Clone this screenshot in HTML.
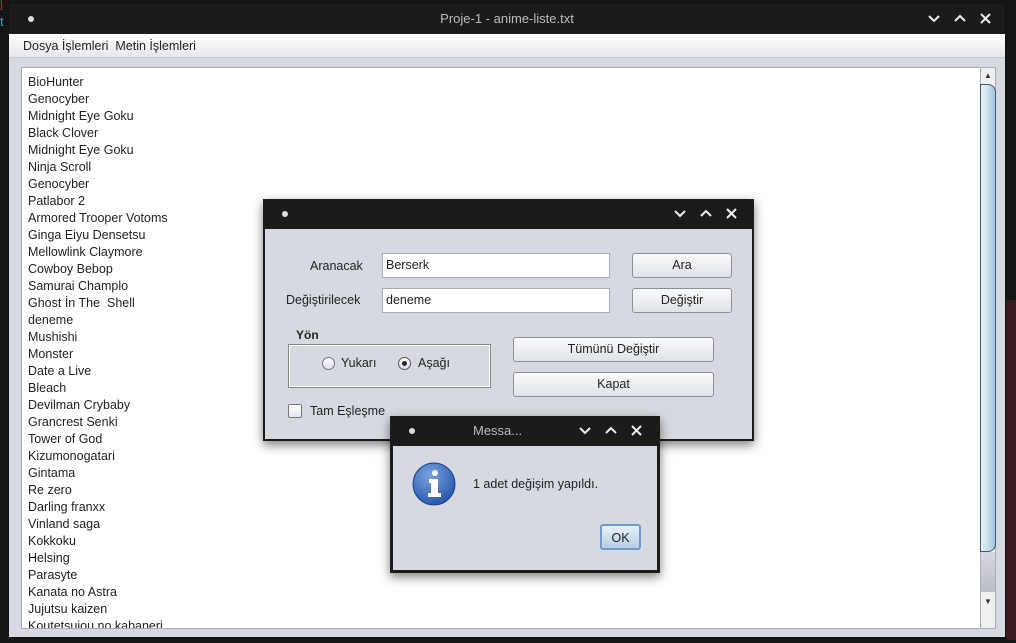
<!DOCTYPE html>
<html><head><meta charset="utf-8"><style>
*{margin:0;padding:0;box-sizing:border-box}
body{width:1016px;height:643px;background:#151515;position:relative;overflow:hidden;font-family:"Liberation Sans","DejaVu Sans",sans-serif;font-size:12.5px;color:#222}
.abs{position:absolute}
.tb{background:#1b1c1a;color:#ccc}
.dot{position:absolute;width:6px;height:6px;border-radius:3px;background:#ddd}
.ctl{position:absolute;color:#eee;font-size:14px;font-weight:bold}
.btn{position:absolute;border:1px solid #8c9099;border-radius:3px;background:linear-gradient(#fafbfc,#dfe2e7);text-align:center;font-size:12.5px;color:#222}
.fld{position:absolute;background:#fff;border:1px solid #a8abb0;padding-left:3px;font-size:12.5px}
</style></head><body>
<div class="abs" style="left:0;top:0;width:8px;height:40px;color:#c33;font-size:10px">]</div>
<div class="abs" style="left:0;top:14px;color:#2ab;font-size:13px">t</div>
<div class="abs" style="left:1006px;top:300px;width:10px;height:340px;background:#3a1a1e"></div>
<!-- main window -->
<div class="abs" style="left:8px;top:3px;width:998px;height:635px;background:#d6d9df;border:1px solid #111">
 <div class="abs tb" style="left:0;top:0;width:996px;height:30px">
  <div class="dot" style="left:19px;top:12px"></div>
  <div class="abs" style="left:0;width:996px;top:7px;text-align:center;font-size:13px;color:#bbb">Proje-1 - anime-liste.txt</div>
  <svg class="abs" style="left:916px;top:8px" width="80" height="14" viewBox="0 0 80 14" fill="none" stroke="#eee" stroke-width="2"><path d="M4 4l5 5 5-5"/><path d="M30 9l5-5 5 5"/><path d="M56 2l9 9M65 2l-9 9"/></svg>
 </div>
 <div class="abs" style="left:0;top:30px;width:996px;height:24px;background:linear-gradient(#fff,#e6e8eb);border-bottom:1px solid #c6c9ce">
  <div class="abs" style="left:14px;top:5px">Dosya İşlemleri&nbsp;&nbsp;Metin İşlemleri</div>
 </div>
 <div class="abs" style="left:12px;top:63px;width:960px;height:562px;background:#fff;border:1px solid #a9acb1;overflow:hidden">
  <div style="padding:6px 0 0 6px;line-height:17px">BioHunter<br>Genocyber<br>Midnight Eye Goku<br>Black Clover<br>Midnight Eye Goku<br>Ninja Scroll<br>Genocyber<br>Patlabor 2<br>Armored Trooper Votoms<br>Ginga Eiyu Densetsu<br>Mellowlink Claymore<br>Cowboy Bebop<br>Samurai Champlo<br>Ghost İn The &nbsp;Shell<br>deneme<br>Mushishi<br>Monster<br>Date a Live<br>Bleach<br>Devilman Crybaby<br>Grancrest Senki<br>Tower of God<br>Kizumonogatari<br>Gintama<br>Re zero<br>Darling franxx<br>Vinland saga<br>Kokkoku<br>Helsing<br>Parasyte<br>Kanata no Astra<br>Jujutsu kaizen<br>Koutetsujou no kabaneri</div>
 </div>
 <div class="abs" style="left:971px;top:63px;width:16px;height:562px;background:#eef0f2;border:1px solid #a9acb1">
  <div class="abs" style="left:3px;top:3px;font-size:8px;color:#333">▲</div>
  <div class="abs" style="left:-1px;top:16px;width:16px;height:468px;border:1px solid #3c5a7a;border-radius:0 8px 8px 0;background:linear-gradient(90deg,#eaf3fa,#c3d8ea 60%,#a8c2d8)"></div>
  <div class="abs" style="left:0;top:484px;width:14px;height:40px;background:linear-gradient(#d6d9df,#b8bcc4)"></div>
  <div class="abs" style="left:3px;top:529px;font-size:8px;color:#333">▼</div>
 </div>
</div>
<!-- find/replace dialog -->
<div class="abs" style="left:263px;top:199px;width:491px;height:242px;background:#d6d9df;border:2px solid #1b1c1a;border-top:none;box-shadow:0 4px 10px rgba(0,0,0,.5)">
 <div class="abs tb" style="left:-2px;top:0;width:491px;height:30px;border-radius:3px 3px 0 0">
  <div class="dot" style="left:19px;top:12px"></div>
  <svg class="abs" style="left:408px;top:9px" width="80" height="14" viewBox="0 0 80 14" fill="none" stroke="#eee" stroke-width="2"><path d="M4 3l5 5 5-5"/><path d="M30 8l5-5 5 5"/><path d="M56 1l9 9M65 1l-9 9"/></svg>
 </div>
 <div class="abs" style="left:45px;top:60px">Aranacak</div>
 <div class="abs" style="left:21px;top:94px">Değiştirilecek</div>
 <div class="fld" style="left:117px;top:54px;width:228px;height:25px;line-height:23px">Berserk</div>
 <div class="fld" style="left:117px;top:89px;width:228px;height:25px;line-height:23px">deneme</div>
 <div class="btn" style="left:367px;top:54px;width:100px;height:25px;line-height:23px">Ara</div>
 <div class="btn" style="left:367px;top:89px;width:100px;height:25px;line-height:23px">Değiştir</div>
 <div class="abs" style="left:31px;top:129px;font-weight:bold;font-size:12px">Yön</div>
 <div class="abs" style="left:23px;top:145px;width:203px;height:44px;border:1px solid #888;box-shadow:inset 0 0 0 1px #fff"></div>
 <div class="abs" style="left:57px;top:158px;width:13px;height:13px;border:1px solid #777;border-radius:7px;background:linear-gradient(#fff,#dde)"></div>
 <div class="abs" style="left:76px;top:157px">Yukarı</div>
 <div class="abs" style="left:133px;top:158px;width:13px;height:13px;border:1px solid #555;border-radius:7px;background:linear-gradient(#fff,#dde)"><div class="abs" style="left:3px;top:3px;width:5px;height:5px;border-radius:3px;background:#222"></div></div>
 <div class="abs" style="left:153px;top:157px">Aşağı</div>
 <div class="btn" style="left:248px;top:138px;width:201px;height:25px;line-height:23px">Tümünü Değiştir</div>
 <div class="btn" style="left:248px;top:173px;width:201px;height:25px;line-height:23px">Kapat</div>
 <div class="abs" style="left:23px;top:205px;width:14px;height:14px;border:1px solid #777;border-radius:2px;background:linear-gradient(#fff,#e4e6ea)"></div>
 <div class="abs" style="left:45px;top:205px">Tam Eşleşme</div>
</div>
<!-- message dialog -->
<div class="abs" style="left:390px;top:416px;width:270px;height:157px;background:#d6d9df;border:3px solid #1b1c1a;border-top:none;box-shadow:0 4px 10px rgba(0,0,0,.5)">
 <div class="abs tb" style="left:-3px;top:0;width:270px;height:30px;border-radius:3px 3px 0 0">
  <div class="dot" style="left:19px;top:12px"></div>
  <div class="abs" style="left:83px;top:7px;font-size:13px;color:#bbb">Messa...</div>
  <svg class="abs" style="left:186px;top:9px" width="80" height="14" viewBox="0 0 80 14" fill="none" stroke="#eee" stroke-width="2"><path d="M4 3l5 5 5-5"/><path d="M30 8l5-5 5 5"/><path d="M56 1l9 9M65 1l-9 9"/></svg>
 </div>
 <svg class="abs" style="left:19px;top:46px" width="44" height="44" viewBox="0 0 44 44"><defs><radialGradient id="g" cx=".4" cy=".3" r=".8"><stop offset="0" stop-color="#7aa3e0"/><stop offset="1" stop-color="#1f4fa6"/></radialGradient></defs><circle cx="22" cy="22" r="21" fill="url(#g)" stroke="#1a3f86"/><circle cx="23" cy="11" r="3" fill="#fff"/><path d="M17 17h9v14h3v4H16v-4h3v-10h-2z" fill="#fff"/></svg>
 <div class="abs" style="left:80px;top:61px">1 adet değişim yapıldı.</div>
 <div class="btn" style="left:207px;top:108px;width:41px;height:26px;line-height:24px;border:2px solid #6d9bd0;background:linear-gradient(#e8f0f8,#b9cde2)">OK</div>
</div>
</body></html>
